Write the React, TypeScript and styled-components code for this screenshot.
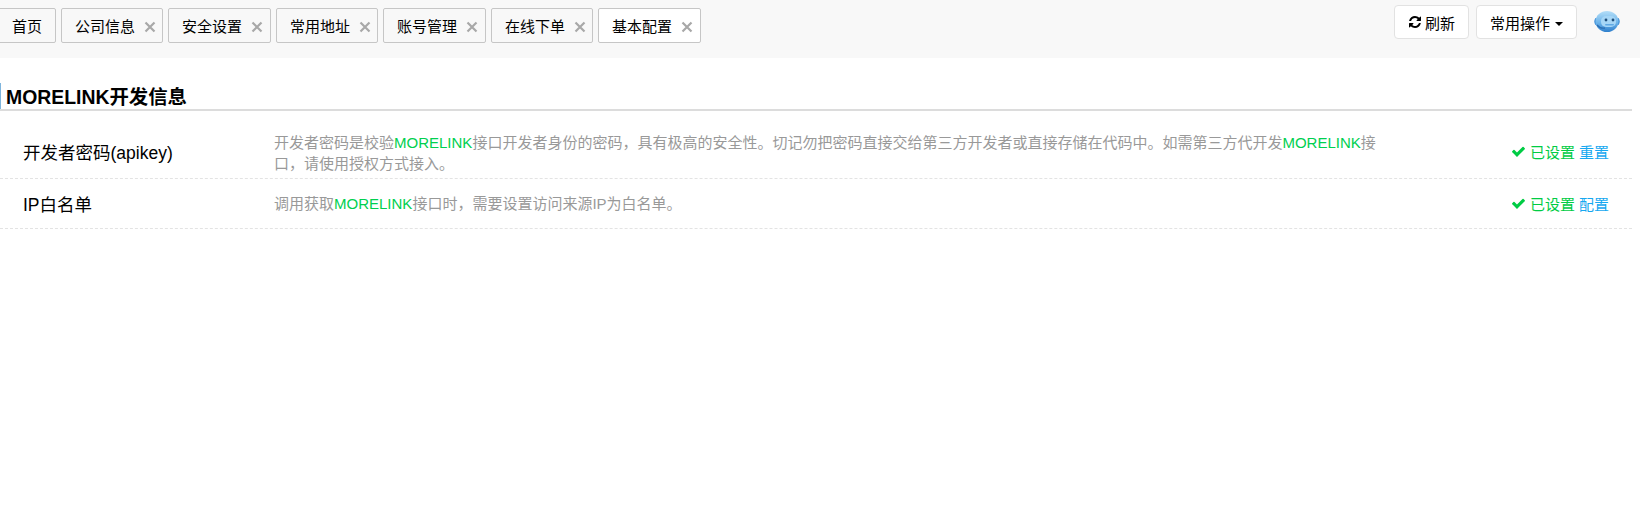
import React from "react";
import styled, { createGlobalStyle } from "styled-components";

const Global = createGlobalStyle`
  html, body { margin: 0; padding: 0; background: #fff; }
  body { font-family: "Liberation Sans", "Noto Sans CJK SC", sans-serif; color: #000; }
`;

const Page = styled.div`
  width: 1640px;
  height: 519px;
  overflow: hidden;
`;

const TopBar = styled.header`
  height: 58px;
  background: #f8f8f8;
  display: flex;
  justify-content: space-between;
  align-items: flex-start;
  box-sizing: border-box;
  padding-top: 8px;
`;

const Tabs = styled.nav`
  display: flex;
  gap: 5px;
  margin-left: -2px;
`;

const Tab = styled.div<{ $active?: boolean; $w: number }>`
  box-sizing: border-box;
  width: ${(p) => p.$w}px;
  height: 35px;
  padding-left: 13px;
  display: flex;
  align-items: center;
  gap: 9px;
  font-size: 15px;
  color: #000;
  background: ${(p) => (p.$active ? "#fff" : "#f8f8f8")};
  border: 1px solid #c6c6c6;
  border-radius: 2px;
  white-space: nowrap;
`;

const Close = styled.svg`
  width: 12px;
  height: 12px;
  margin-top: 3px;
  flex: none;
`;

const Actions = styled.div`
  display: flex;
  align-items: flex-start;
  margin-top: -3px;
`;

const ActionButton = styled.button<{ $gap: number }>`
  box-sizing: border-box;
  height: 34px;
  margin-right: 7px;
  padding: 0 13px;
  display: flex;
  align-items: center;
  gap: ${(p) => p.$gap}px;
  font: inherit;
  font-size: 15px;
  color: #000;
  background: #fff;
  border: 1px solid #e2e2e2;
  border-radius: 4px;
`;

const Caret = styled.span`
  width: 0;
  height: 0;
  margin-top: 4px;
  border-left: 4px solid transparent;
  border-right: 4px solid transparent;
  border-top: 4px solid #000;
`;

const Glyph = styled.svg<{ $s: number }>`
  width: ${(p) => p.$s}px;
  height: ${(p) => p.$s}px;
  flex: none;
  fill: currentColor;
`;

const Bot = styled.svg`
  width: 28px;
  height: 21px;
  margin: 6px 19px 0 9px;
  flex: none;
`;

const Section = styled.section`
  width: 1632px;
  padding-top: 25px;
`;

const Title = styled.h2`
  margin: 0;
  height: 26px;
  box-sizing: border-box;
  border-left: 1px solid #7fb5dd;
  padding-left: 5px;
  font-size: 19.4px;
  line-height: 28px;
  font-weight: bold;
  color: #000;
  white-space: nowrap;
`;

const Rule = styled.div`
  height: 2px;
  background: #dcdcdc;
  margin-bottom: 10px;
`;

const Row = styled.div<{ $h: number; $top?: number }>`
  display: flex;
  height: ${(p) => p.$h}px;
  box-sizing: border-box;
  border-bottom: 1px dashed #e3e3e3;
  padding: ${(p) => p.$top ?? 0}px 23px 0 23px;
  align-items: center;
`;

const Label = styled.div<{ $shift?: number }>`
  width: 251px;
  flex: none;
  font-size: 17.5px;
  color: #000;
  padding-top: ${(p) => p.$shift ?? 0}px;
`;

const Desc = styled.div<{ $shift?: number }>`
  width: 1116px;
  flex: none;
  font-size: 15px;
  line-height: 21px;
  color: #999;
  padding-top: ${(p) => p.$shift ?? 0}px;
`;

const Brand = styled.span`
  color: #00d050;
`;

const Status = styled.div`
  margin-left: auto;
  display: flex;
  align-items: center;
  gap: 4px;
  font-size: 15px;
  color: #00cc44;
  white-space: nowrap;
`;

const StatusLink = styled.a`
  color: #16a8f0;
`;

const tabs: [string, number][] = [
  ["公司信息", 102],
  ["安全设置", 103],
  ["常用地址", 102],
  ["账号管理", 103],
  ["在线下单", 102],
  ["基本配置", 103],
];

const X = () => (
  <Close viewBox="0 0 12 12">
    <path d="M1.5 1.5 L10.5 10.5 M10.5 1.5 L1.5 10.5" stroke="#a8a8a8" strokeWidth="2.2" fill="none" />
  </Close>
);

const Check = () => (
  <Glyph $s={15} viewBox="0 0 1792 1792">
    <path d="M1671 566q0 40-28 68l-724 724-136 136q-28 28-68 28t-68-28l-136-136-362-362q-28-28-28-68t28-68l136-136q28-28 68-28t68 28l294 295 656-657q28-28 68-28t68 28l136 136q28 28 28 68z" />
  </Glyph>
);

const Refresh = () => (
  <Glyph $s={14} viewBox="0 0 1792 1792">
    <path d="M1639 1056q0 5-1 7-64 268-268 434.5t-478 166.5q-146 0-282.5-55t-243.5-157l-129 129q-19 19-45 19t-45-19-19-45v-448q0-26 19-45t45-19h448q26 0 45 19t19 45-19 45l-137 137q71 66 161 102t187 36q134 0 250-65t186-179q11-17 53-117 8-23 30-23h192q13 0 22.5 9.5t9.5 22.5zm25-800v448q0 26-19 45t-45 19h-448q-26 0-45-19t-19-45 19-45l138-138q-148-137-349-137-134 0-250 65t-186 179q-11 17-53 117-8 23-30 23h-199q-13 0-22.5-9.5t-9.5-22.5v-7q65-268 270-434.5t480-166.5q146 0 284 55.5t245 156.5l130-129q19-19 45-19t45 19 19 45z" />
  </Glyph>
);

export default function App() {
  return (
    <Page>
      <Global />
      <TopBar>
        <Tabs>
          <Tab $w={58}>首页</Tab>
          {tabs.map(([t, w], i) => (
            <Tab key={t} $w={w} $active={i === tabs.length - 1}>
              {t}
              <X />
            </Tab>
          ))}
        </Tabs>
        <Actions>
          <ActionButton $gap={3}>
            <Refresh />
            刷新
          </ActionButton>
          <ActionButton $gap={5}>
            常用操作
            <Caret />
          </ActionButton>
          <Bot viewBox="0 0 28 21">
            <defs>
              <linearGradient id="botFace" x1="0" y1="0" x2="0" y2="1">
                <stop offset="0" stopColor="#b4def8" />
                <stop offset="0.55" stopColor="#6db4ea" />
                <stop offset="1" stopColor="#2f7fcc" />
              </linearGradient>
            </defs>
            <path d="M2.5 7 H5 V14 H2.5 Q0 10.5 2.5 7 Z M25.5 7 H23 V14 H25.5 Q28 10.5 25.5 7 Z" fill="#3f90d8" />
            <ellipse cx="14" cy="10.5" rx="11.5" ry="10.5" fill="url(#botFace)" />
            <rect x="8" y="5" width="15" height="11" rx="5" fill="#a6d6f6" />
            <circle cx="13" cy="9" r="1.4" fill="#1f4f7d" />
            <circle cx="20" cy="9" r="1.4" fill="#1f4f7d" />
            <rect x="12" y="13" width="9" height="1.6" rx="0.8" fill="#5fa8e4" />
            <path d="M4 14 Q7 18 12 17" stroke="#2a6fb5" strokeWidth="1.3" fill="none" />
          </Bot>
        </Actions>
      </TopBar>
      <Section>
        <Title>MORELINK开发信息</Title>
        <Rule />
        <Row $h={58} $top={3}>
          <Label $shift={1}>开发者密码(apikey)</Label>
          <Desc $shift={3}>
            开发者密码是校验<Brand>MORELINK</Brand>接口开发者身份的密码，具有极高的安全性。切记勿把密码直接交给第三方开发者或直接存储在代码中。如需第三方代开发<Brand>MORELINK</Brand>接口，请使用授权方式接入。
          </Desc>
          <Status>
            <Check />
            <span>已设置</span>
            <StatusLink>重置</StatusLink>
          </Status>
        </Row>
        <Row $h={50}>
          <Label>IP白名单</Label>
          <Desc>
            调用获取<Brand>MORELINK</Brand>接口时，需要设置访问来源IP为白名单。
          </Desc>
          <Status>
            <Check />
            <span>已设置</span>
            <StatusLink>配置</StatusLink>
          </Status>
        </Row>
      </Section>
    </Page>
  );
}
